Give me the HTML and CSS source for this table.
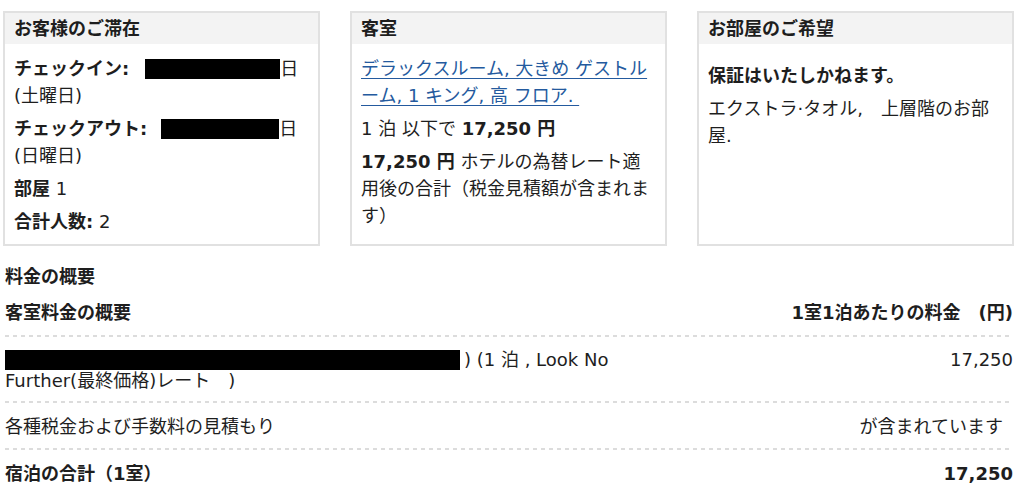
FILE: index.html
```html
<!DOCTYPE html>
<html lang="ja">
<head>
<meta charset="utf-8">
<link rel="stylesheet" href="styles.css">
</head>
<body>
<div class="cards">
  <section class="card">
    <h2 class="card-head">お客様のご滞在</h2>
    <div class="card-body">
      <p><span class="nowrap"><b>チェックイン:</b><span class="redact r-in"></span>日</span><br>(土曜日)</p>
      <p><span class="nowrap"><b>チェックアウト:</b><span class="redact r-out"></span>日</span><br>(日曜日)</p>
      <p><b>部屋</b> 1</p>
      <p><b>合計人数:</b> 2</p>
    </div>
  </section>
  <section class="card">
    <h2 class="card-head">客室</h2>
    <div class="card-body">
      <p><a class="room-link" href="#">デラックスルーム, 大きめ ゲストルーム, 1 キング, 高 フロア.&nbsp;</a></p>
      <p>1 泊 以下で <b>17,250 円</b></p>
      <p><b>17,250 円</b> ホテルの為替レート適用後の合計（税金見積額が含まれます）</p>
    </div>
  </section>
  <section class="card">
    <h2 class="card-head">お部屋のご希望</h2>
    <div class="card-body">
      <p class="first-gap"><b>保証はいたしかねます。</b></p>
      <p>エクストラ·タオル,　上層階のお部屋.</p>
    </div>
  </section>
</div>

<div class="summary">
  <h3 class="summary-title">料金の概要</h3>
  <div class="row head-row">
    <div class="label">客室料金の概要</div>
    <div class="value">1室1泊あたりの料金　(円)</div>
  </div>
  <div class="row detail-row">
    <div class="label"><span class="redact r-row"></span>) (1 泊 , Look No Further(最終価格)レート　)</div>
    <div class="value">17,250</div>
  </div>
  <div class="row">
    <div class="label">各種税金および手数料の見積もり</div>
    <div class="value inset">が含まれています</div>
  </div>
  <div class="row total-row">
    <div class="label">宿泊の合計（1室）</div>
    <div class="value">17,250</div>
  </div>
</div>
</body>
</html>
```

FILE: styles.css
```css
* { box-sizing: border-box; }

body {
  margin: 0;
  background: #fff;
  color: #1e1e1e;
  font-family: "DejaVu Sans", "Noto Sans CJK JP", sans-serif;
  font-size: 18px;
}

.cards {
  display: flex;
  gap: 30px;
  padding: 11px 0 0 3px;
}

.card {
  width: 317px;
  height: 235px;
  border: 2px solid #e1e1e1;
  display: flex;
  flex-direction: column;
}

.card-head {
  margin: 0;
  height: 31px;
  background: #f3f3f3;
  padding: 0 9px;
  font-size: 18px;
  font-weight: 700;
  line-height: 31px;
}

.card-body {
  padding: 11px 9px;
}

.card-body p {
  margin: 0 0 6px;
  line-height: 27px;
}

.card-body p.first-gap { margin-top: 7px; }

.nowrap { white-space: nowrap; }

.redact {
  display: inline-block;
  background: #000;
  height: 20px;
  vertical-align: -4px;
}

.r-in { width: 135px; margin-left: 16px; }
.r-out { width: 118px; margin-left: 14px; }
.r-row { width: 455px; margin-right: 4px; }

.room-link {
  color: #245a9e;
  text-decoration: underline;
  text-underline-offset: 3px;
}

.summary {
  width: 1013px;
  padding: 17px 0 0 5px;
}

.summary-title {
  margin: 0;
  font-size: 18px;
  font-weight: 700;
  line-height: 27px;
}

.row {
  display: flex;
  justify-content: space-between;
  align-items: flex-start;
  padding: 10px 0;
  line-height: 27px;
  background-image: repeating-linear-gradient(to right, #dcdcdc 0 4px, transparent 4px 8px);
  background-size: 100% 2px;
  background-repeat: no-repeat;
  background-position: left bottom;
}

.head-row {
  font-weight: 700;
  padding: 9px 0 11px;
}

.detail-row {
  padding: 12px 0 12px;
  line-height: 21px;
}

.detail-row .label { width: 615px; }

.total-row { background-image: none; }
.total-row .label, .total-row .value { font-weight: 700; }

.value { text-align: right; white-space: nowrap; }
.value.inset { padding-right: 10px; }
```
